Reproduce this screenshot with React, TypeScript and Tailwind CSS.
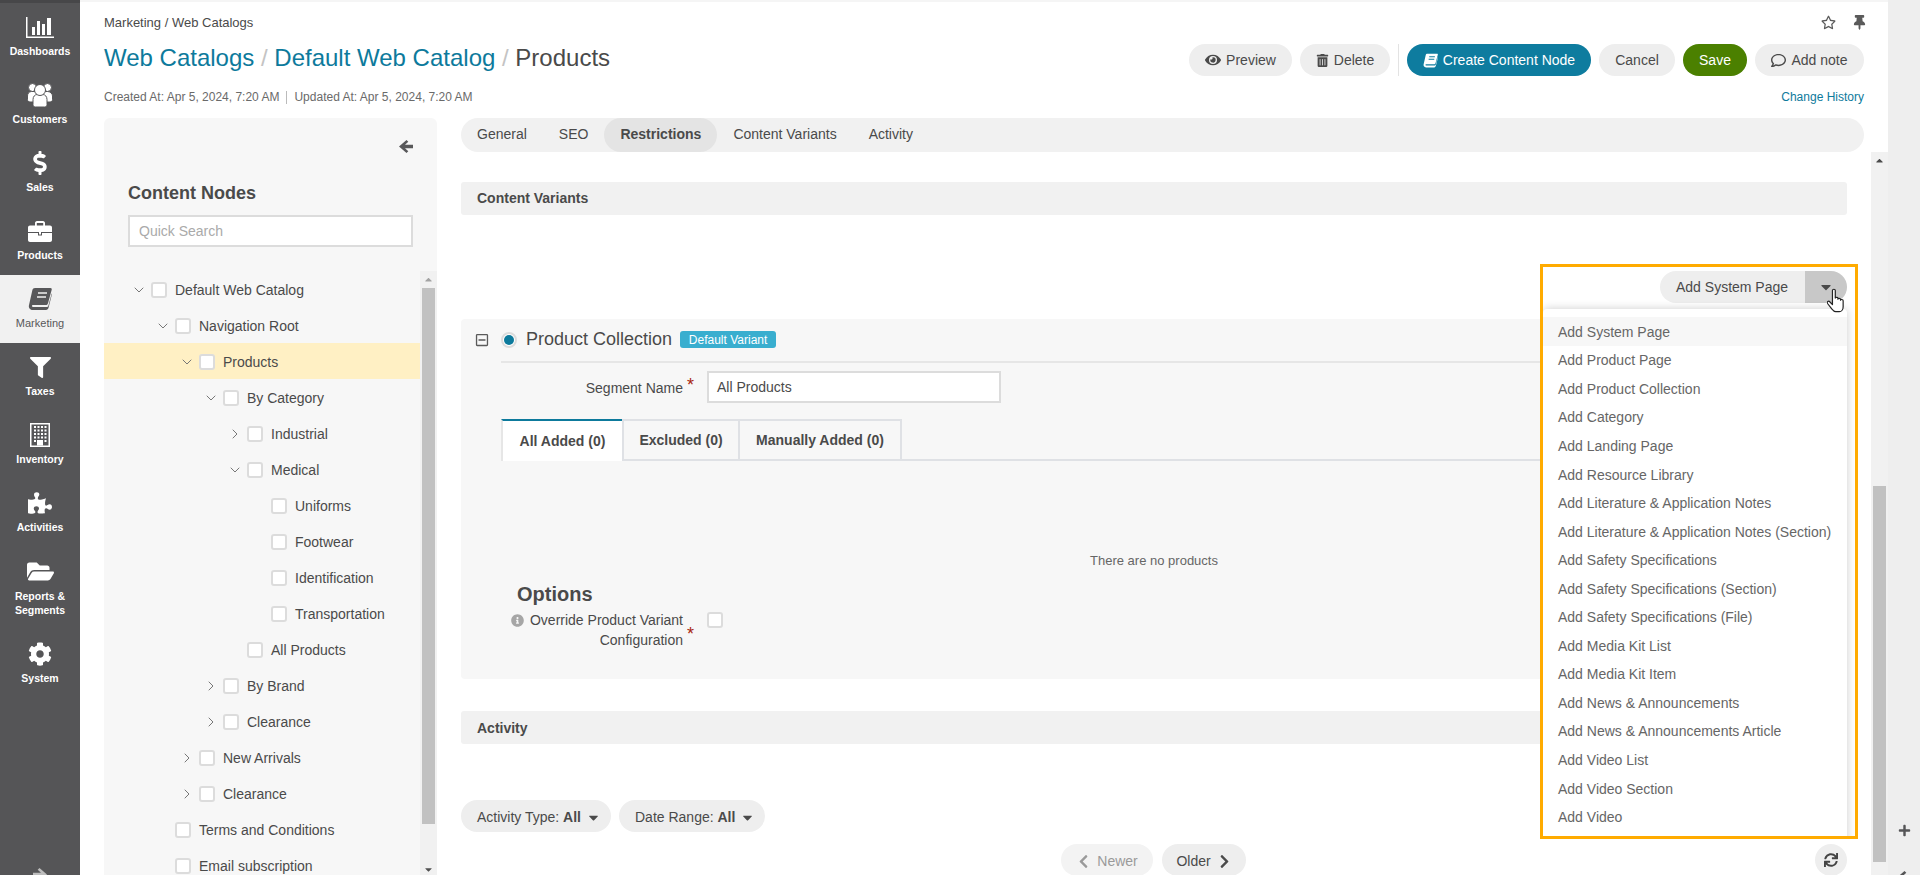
import React from "react";
import {
  FaDollarSign, FaFilter, FaPuzzlePiece, FaFolderOpen, FaCog,
  FaEye, FaTrashAlt, FaRegComment, FaRegStar, FaThumbtack, FaInfoCircle, FaRegMinusSquare,
  FaCaretDown, FaCaretUp, FaChevronLeft, FaChevronRight, FaSync, FaPlus,
} from "react-icons/fa";
import { ChevronDown, ChevronRight } from "lucide-react";

function ChartIcon() {
  return (
    <svg width="28" height="21" viewBox="0 0 28 21" fill="#fff">
      <path d="M0 0h1.5v19.5H28V21H0z" />
      <rect x="6" y="10" width="3" height="8" />
      <rect x="11" y="4" width="3" height="14" />
      <rect x="16" y="7" width="3" height="11" />
      <rect x="21" y="1" width="4" height="17" />
    </svg>
  );
}

function UsersIcon() {
  return (
    <svg width="26" height="24" viewBox="0 0 26 24" fill="#fff" stroke="#555557" strokeWidth="1">
      <circle cx="5.5" cy="4.5" r="4" />
      <circle cx="20.5" cy="4.5" r="4" />
      <path d="M.5 16.5v-3.5c0-2.5 1.5-4.5 4-4.5h16c2.5 0 5 2 5 4.5v3.5c0 1.5-1 2.5-2.5 2.5h-20C1.500 19 .5 18 .5 16.500z" />
      <path d="M6 21.500v-5c0-3 2-5 4-5h6c2 0 4 2 4 5v5c0 1.500-1 2.500-2.500 2.500h-9C7 24 6 23 6 21.500z" />
      <circle cx="13" cy="7" r="5.500" />
    </svg>
  );
}

function BriefcaseIcon() {
  return (
    <svg width="24" height="21" viewBox="0 0 24 21" fill="#fff">
      <path fillRule="evenodd" d="M7 4.500V2c0-1 .8-2 2-2h6c1.200 0 2 1 2 2v2.500h5c1.100 0 2 .9 2 2V11H0V6.500c0-1.100.9-2 2-2zM8.800 2v2.500h6.400V2z" />
      <path d="M0 12h10v2.500h4V12h10v7c0 1.100-.9 2-2 2H2c-1.100 0-2-.9-2-2z" />
      <rect x="11" y="11" width="2" height="2.500" />
    </svg>
  );
}

function BookIcon({ size, cut }: { size: number; cut: string }) {
  return (
    <svg width={size} height={size} viewBox="0 0 24 24" fill="currentColor">
      <path d="M7 1h15.500c1 0 1.500.8 1.200 1.800l-3.700 13.400c-.4 1.300-1.100 1.800-2.300 1.800H5.500c-1.200 0-1.700.6-1.500 1.200.2.600.8.8 1.600.8H19c.6 0 1-.3 1.200-.8L23.700 6.500l.3.6-3.400 13.400c-.4 1.400-1.200 2.500-2.700 2.500H4.800C2.400 23 .4 21 .9 18.500L4.400 3C4.700 1.800 5.600 1 7 1z" />
      <path d="M10 6h9M9 10h9" stroke={cut} strokeWidth="1.600" fill="none" />
    </svg>
  );
}

function BuildingIcon() {
  const cols = [4, 7.500, 11, 14.500];
  const rows = [3, 6.500, 10, 13.500, 17];
  return (
    <svg width="20" height="24" viewBox="0 0 20 24" fill="#fff">
      <path fillRule="evenodd" d="M0 0h20v24H0zM1.500 1.500v21h17v-21z" />
      {rows.flatMap((r) =>
        cols.map((c) => ((r === 17 && (c === 7.500 || c === 11)) ? null : <rect key={`${r}-${c}`} x={c} y={r} width="2" height="2" />)),
      )}
      <rect x="7" y="17" width="6" height="5.500" />
    </svg>
  );
}

function ThickArrow({ className = "" }: { className?: string }) {
  return (
    <svg width="14" height="13" viewBox="0 0 14 13" fill="currentColor" className={className}>
      <path d="M7.500 0L0 6.500 7.500 13 9.300 11.200 6 8.200H14V4.800H6L9.300 1.800z" />
    </svg>
  );
}

const navItems: { label: string[]; icon: React.ReactNode; active?: boolean; tall?: boolean }[] = [
  { label: ["Dashboards"], icon: <ChartIcon /> },
  { label: ["Customers"], icon: <UsersIcon /> },
  { label: ["Sales"], icon: <FaDollarSign size={24} /> },
  { label: ["Products"], icon: <BriefcaseIcon /> },
  { label: ["Marketing"], icon: <BookIcon size={24} cut="#f1f1f1" />, active: true },
  { label: ["Taxes"], icon: <FaFilter size={21} /> },
  { label: ["Inventory"], icon: <BuildingIcon /> },
  { label: ["Activities"], icon: <FaPuzzlePiece size={24} /> },
  { label: ["Reports &", "Segments"], icon: <FaFolderOpen size={27} />, tall: true },
  { label: ["System"], icon: <FaCog size={24} /> },
];

const tree: { name: string; level: number; open?: boolean; closed?: boolean; selected?: boolean }[] = [
  { name: "Default Web Catalog", level: 0, open: true },
  { name: "Navigation Root", level: 1, open: true },
  { name: "Products", level: 2, open: true, selected: true },
  { name: "By Category", level: 3, open: true },
  { name: "Industrial", level: 4, closed: true },
  { name: "Medical", level: 4, open: true },
  { name: "Uniforms", level: 5 },
  { name: "Footwear", level: 5 },
  { name: "Identification", level: 5 },
  { name: "Transportation", level: 5 },
  { name: "All Products", level: 4 },
  { name: "By Brand", level: 3, closed: true },
  { name: "Clearance", level: 3, closed: true },
  { name: "New Arrivals", level: 2, closed: true },
  { name: "Clearance", level: 2, closed: true },
  { name: "Terms and Conditions", level: 1 },
  { name: "Email subscription", level: 1 },
];

const menuItems = [
  "Add System Page", "Add Product Page", "Add Product Collection", "Add Category", "Add Landing Page",
  "Add Resource Library", "Add Literature & Application Notes", "Add Literature & Application Notes (Section)",
  "Add Safety Specifications", "Add Safety Specifications (Section)", "Add Safety Specifications (File)",
  "Add Media Kit List", "Add Media Kit Item", "Add News & Announcements", "Add News & Announcements Article",
  "Add Video List", "Add Video Section", "Add Video",
];

function Checkbox() {
  return <span className="block w-4 h-4 shrink-0 bg-white border-2 border-[#dcdcdc] rounded-[3px]" />;
}

function PillButton({ children, className = "" }: { children: React.ReactNode; className?: string }) {
  return (
    <button className={`h-8 rounded-full bg-[#eeeeee] text-[#4a4a4a] text-[14px] flex items-center justify-center ${className}`}>
      {children}
    </button>
  );
}

function Star() {
  return <span className="text-[#a8260f] text-[18px] leading-[16px] font-normal">*</span>;
}

export default function App() {
  return (
    <div className="w-[1920px] h-[875px] overflow-hidden flex bg-white text-[#4a4a4a] font-['Liberation_Sans',Arial,sans-serif] text-[14px]">
      {/* Sidebar */}
      <aside className="w-20 shrink-0 h-full bg-[#555557] flex flex-col">
        <div className="h-[3px] shrink-0 bg-[#474749]" />
        {navItems.map((it) => (
          <div
            key={it.label[0]}
            className={`w-full flex flex-col items-center pt-2.5 shrink-0 ${it.tall ? "h-[83px]" : "h-[68px]"} ${it.active ? "bg-[#f1f1f1] text-[#58585a]" : "text-white"}`}
          >
            <span className="h-7 flex items-center justify-center">{it.icon}</span>
            <span className={`mt-1 text-center ${it.tall ? "leading-[14px]" : "leading-[13px]"} ${it.active ? "text-[11px]" : "text-[10.5px] font-bold"}`}>
              {it.label.map((l) => <span key={l} className="block">{l}</span>)}
            </span>
          </div>
        ))}
        <div className="mt-auto h-[7px] flex justify-center overflow-hidden text-[#bdbdbd]">
          <ThickArrow className="shrink-0 -scale-x-100" />
        </div>
      </aside>

      {/* Main */}
      <main className="flex-1 min-w-0 flex flex-col">
        <div className="h-[2px] shrink-0 bg-[#f5f5f5]" />
        <div className="px-6 pt-3 shrink-0">
          <div className="h-[17px] flex items-center justify-between">
            <div className="text-[13px]">Marketing / Web Catalogs</div>
            <div className="flex items-center gap-4 text-[#5a5a5a]">
              <FaRegStar size={15} />
              <FaThumbtack size={15} className="-mr-[3px]" />
            </div>
          </div>
          <div className="mt-[13px] h-8 flex items-start justify-between">
            <h1 className="text-[24px] leading-[28px] font-normal text-[#4a4a4a]">
              <span className="text-[#0d7a9c]">Web Catalogs</span>
              <span className="text-[#c4c4c4]"> / </span>
              <span className="text-[#0d7a9c]">Default Web Catalog</span>
              <span className="text-[#c4c4c4]"> / </span>
              <span>Products</span>
            </h1>
            <div className="flex items-center gap-2">
              <PillButton className="w-[103px] gap-[5px]"><FaEye size={16} />Preview</PillButton>
              <PillButton className="w-[90px] gap-[5px]"><FaTrashAlt size={13} />Delete</PillButton>
              <span className="w-px h-8 bg-[#e3e3e3]" />
              <PillButton className="w-[184px] gap-[5px] !bg-[#0e7c9f] !text-white"><BookIcon size={15} cut="#0e7c9f" />Create Content Node</PillButton>
              <PillButton className="w-[76px]">Cancel</PillButton>
              <PillButton className="w-[64px] !bg-[#4b8000] !text-white">Save</PillButton>
              <PillButton className="w-[109px] gap-[5px]"><FaRegComment size={15} />Add note</PillButton>
            </div>
          </div>
          <div className="mt-[13px] h-4 flex items-center justify-between text-[12px] leading-4">
            <div className="flex items-center text-[#6a6a6a]">
              <span>Created At: Apr 5, 2024, 7:20 AM</span>
              <span className="w-px h-[13px] bg-[#bbbbbb] mx-[7px]" />
              <span>Updated At: Apr 5, 2024, 7:20 AM</span>
            </div>
            <span className="text-[#0d7a9c]">Change History</span>
          </div>
        </div>

        <div className="flex-1 min-h-0 mt-[13px] flex pl-6 gap-6">
          {/* Left panel */}
          <section className="w-[333px] shrink-0 bg-[#f7f7f7] rounded-t-[6px] flex flex-col min-h-0">
            <div className="px-6 pt-5 pb-6 shrink-0">
              <div className="h-4 flex items-center justify-end text-[#58585a]"><ThickArrow /></div>
              <h2 className="mt-[27px] text-[18px] leading-6 font-bold">Content Nodes</h2>
              <input
                readOnly
                placeholder="Quick Search"
                className="mt-[10px] block w-full h-8 bg-white border-2 border-[#dcdcdc] px-[9px] text-[14px] outline-none placeholder:text-[#aaaaaa]"
              />
            </div>
            <div className="flex-1 min-h-0 flex overflow-hidden">
              <div className="flex-1 min-w-0">
                {tree.map((n, i) => (
                  <div
                    key={n.name + i}
                    className={`h-9 pt-[2px] flex items-center ${n.selected ? "bg-[#fff0c4]" : ""}`}
                    style={{ paddingLeft: 27 + n.level * 24 }}
                  >
                    <span className="w-5 h-4 flex items-center justify-start text-[#777777]">
                      {n.open && <ChevronDown size={16} strokeWidth={1.5} />}
                      {n.closed && <ChevronRight size={16} strokeWidth={1.5} />}
                    </span>
                    <Checkbox />
                    <span className="ml-2 text-[14px]">{n.name}</span>
                  </div>
                ))}
              </div>
              <div className="w-[17px] shrink-0 bg-[#f1f1f1] flex flex-col items-center">
                <span className="h-[17px] shrink-0 flex items-center justify-center text-[#a3a3a3]"><FaCaretUp size={11} /></span>
                <span className="w-[13px] h-[536px] shrink-0 bg-[#c1c1c1]" />
                <span className="flex-1 flex items-end justify-center text-[#505050]"><FaCaretDown size={11} /></span>
              </div>
            </div>
          </section>

          {/* Right column */}
          <div className="flex-1 min-w-0 flex flex-col">
            <div className="mr-6 h-[34px] shrink-0 rounded-full bg-[#f1f1f1] flex items-center pl-4 pb-[2px]">
              <span>General</span>
              <span className="ml-8">SEO</span>
              <span className="ml-[16px] -mb-[2px] h-[34px] pb-[2px] w-[113px] rounded-full bg-[#e4e4e4] font-bold flex items-center justify-center">Restrictions</span>
              <span className="ml-4">Content Variants</span>
              <span className="ml-[32px]">Activity</span>
            </div>
            <div className="flex-1 min-h-0 flex relative">
              <div className="flex-1 min-w-0 pr-6">
                <div className="mt-[30px] h-[33px] bg-[#f1f1f1] rounded-[3px] flex items-center px-4 font-bold">Content Variants</div>

                <div className="mt-14 flex justify-end">
                  <div className="h-8 flex rounded-full overflow-hidden">
                    <span className="w-[145px] bg-[#eeeeee] pl-4 flex items-center">Add System Page</span>
                    <span className="w-[42px] bg-[#c8c8c8] flex items-center justify-center text-[#4a4a4a]"><FaCaretDown size={16} /></span>
                  </div>
                </div>

                {/* Product Collection panel */}
                <section className="mt-4 h-[360px] bg-[#f7f7f7] rounded-[4px] flex">
                  <div className="w-10 shrink-0 pl-[14px] pt-[13px] text-[#5a5a5a]"><FaRegMinusSquare size={14} className="mt-px" /></div>
                  <div className="flex-1 min-w-0 pr-10">
                    <div className="h-[45px] border-b-2 border-[#e6e6e6] flex items-center -mt-px">
                      <span className="w-4 h-4 rounded-full bg-white border-2 border-[#dcdcdc] flex items-center justify-center">
                        <span className="block w-2.5 h-2.5 rounded-full bg-[#0d7a9c]" />
                      </span>
                      <span className="ml-[9px] text-[18px]">Product Collection</span>
                      <span className="ml-[8px] h-[17px] w-[96px] rounded-[3px] bg-[#39aecf] text-white text-[12px] flex items-center justify-center">Default Variant</span>
                    </div>
                    <div className="mt-2 flex items-center h-8">
                      <span className="w-[182px] text-right pt-[2px]">Segment Name</span>
                      <span className="w-6 pl-[4px] self-start pt-[5px]"><Star /></span>
                      <span className="w-[294px] h-8 bg-white border-2 border-[#dcdcdc] px-2 pt-px flex items-center">All Products</span>
                    </div>
                    <div className="mt-4 h-[42px] flex border-b-2 border-[#dfe1e5] font-bold">
                      <span className="w-[121px] h-[42px] bg-white border-t-2 border-t-[#0d7a9c] border-l-2 border-l-[#e6e6e6] flex items-center justify-center">All Added (0)</span>
                      <span className="w-[118px] h-10 border-t-2 border-r-2 border-l-2 border-[#dfe1e5] flex items-center justify-center">Excluded (0)</span>
                      <span className="w-[162px] h-10 border-t-2 border-r-2 border-[#dfe1e5] flex items-center justify-center">Manually Added (0)</span>
                    </div>
                    <div className="h-[118px] flex items-end justify-center pb-[10px] text-[13px] text-[#666666] leading-4">There are no products</div>
                    <div className="ml-4 mt-[3px] text-[20px] leading-6 font-bold">Options</div>
                    <div className="mt-[4px] flex items-start">
                      <div className="w-[182px] text-right leading-5">
                        <FaInfoCircle size={13} className="inline-block mr-[6px] -mt-[2px] text-[#a6a6a6]" />
                        Override Product Variant<br />Configuration
                      </div>
                      <span className="w-6 pl-[4px] h-10 flex items-end pb-[8px]"><Star /></span>
                      <span className="mt-[2px]"><Checkbox /></span>
                    </div>
                  </div>
                </section>

                <div className="mt-8 h-[33px] pt-px bg-[#f1f1f1] rounded-[3px] flex items-center px-4 font-bold">Activity</div>

                <div className="mt-14 flex gap-2">
                  <PillButton className="w-[150px] !justify-start pl-4 pt-[2px] gap-[5px]"><span>Activity Type: <b>All</b></span><FaCaretDown size={15} /></PillButton>
                  <PillButton className="w-[146px] !justify-start pl-4 pt-[2px] gap-[5px]"><span>Date Range: <b>All</b></span><FaCaretDown size={15} /></PillButton>
                </div>
                <div className="mt-3 flex items-center">
                  <div className="ml-[600px] flex gap-[9px]">
                    <PillButton className="w-[92px] gap-[6px] pt-[2px] !text-[#9a9a9a] !bg-[#f3f3f3]"><FaChevronLeft size={15} />Newer</PillButton>
                    <PillButton className="w-[84px] gap-[6px] pt-[2px]">Older<FaChevronRight size={15} /></PillButton>
                  </div>
                  <PillButton className="ml-auto w-8 !text-[#444444]"><FaSync size={14} /></PillButton>
                </div>
              </div>
              <div className="w-[17px] shrink-0 bg-[#f1f1f1] flex flex-col items-center">
                <span className="h-[17px] shrink-0 flex items-center justify-center text-[#4a4a4a]"><FaCaretUp size={11} /></span>
                <span className="mt-[317px] w-[13px] h-[376px] shrink-0 bg-[#c1c1c1]" />
              </div>

              {/* Dropdown highlighted overlay */}
              <div className="absolute left-[1079px] top-[112px] w-[318px] h-[575px] border-[3px] border-[#ffab00] overflow-hidden">
                <div className="absolute left-0 top-[42px] w-[304px] h-[540px] bg-white rounded-t-[4px] shadow-[0_0_10px_rgba(0,0,0,0.2)] pt-2">
                  {menuItems.map((m, i) => (
                    <div key={m} className={`h-[28.55px] pl-[15px] pt-[2px] flex items-center text-[#666666] ${i === 0 ? "bg-[#f7f7f7]" : ""}`}>{m}</div>
                  ))}
                </div>
                <svg className="absolute left-[284px] top-[21px]" width="18" height="25" viewBox="2 0.5 16.500 22.500" fill="#fff" stroke="#222" strokeWidth="1.100" strokeLinejoin="round">
                  <path d="M7 2.500c0-1.400 2.600-1.400 2.600 0v7c0-1 2.400-1 2.400 0v1c0-1 2.400-1 2.400.2v.8c0-1 2.400-.9 2.400.4v5.500c0 2.500-1.500 4.600-3.500 4.600H10c-1.800 0-2.800-1.500-4-3L2.500 14.500c-1-1.500 1-2.800 2-1.600L7 15.500z" />
                </svg>
              </div>
            </div>
          </div>
        </div>
      </main>

      {/* Right rail */}
      <aside className="w-8 shrink-0 h-full bg-[#eeeeee] flex flex-col items-center justify-end text-[#555557]">
        <FaPlus size={13} className="mb-[34px] shrink-0" />
        <div className="h-[4px] overflow-hidden"><ThickArrow className="shrink-0" /></div>
      </aside>
    </div>
  );
}
